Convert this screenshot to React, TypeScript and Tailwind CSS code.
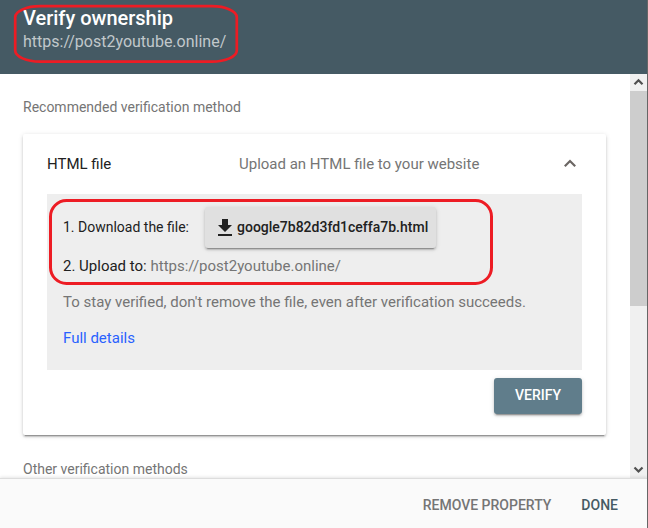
import React from "react";

function Header() {
  return (
    <header className="relative h-[74px] shrink-0 bg-[#455a64] pl-[23px] pt-[6px]">
      <h1 className="text-[20px] font-medium leading-6 text-white">Verify ownership</h1>
      <p className="pt-px text-[16px] leading-[22px] text-[#c1c8cb]">https://post2youtube.online/</p>
      <svg className="absolute left-0 top-0" width="260" height="74" fill="none" stroke="#ed1c24" strokeWidth="2.7">
        <rect x="15.2" y="6.2" width="221.6" height="55.4" rx="25" ry="11" />
      </svg>
    </header>
  );
}

function Instructions() {
  return (
    <div className="relative h-[176px] bg-[#eeeeee] px-4 pt-[13px] text-[15px] text-[#757575]">
      <div className="flex h-[41px] items-center text-[#212121]">
        <span className="w-[142px] text-[14px]">1. Download the file:</span>
        <button className="flex h-[41px] w-[231px] items-center rounded-[3px] bg-[#e0e0e0] pl-[13px] text-[14px] font-medium shadow-[0_2px_2px_rgba(0,0,0,0.16),0_3px_1px_-2px_rgba(0,0,0,0.25),0_1px_5px_rgba(0,0,0,0.14)]">
          <svg width="14" height="17" viewBox="0 0 14 17" fill="#212121" className="mr-[5px] shrink-0">
            <path d="M4 0h6v6h4L7 13 0 6h4zM0 15h14v2H0z" />
          </svg>
          google7b82d3fd1ceffa7b.html
        </button>
      </div>
      <p className="mt-[8px] leading-5">
        <span className="text-[#212121]">2. Upload to: </span>https://post2youtube.online/
      </p>
      <p className="mt-[16px] leading-5">To stay verified, don't remove the file, even after verification succeeds.</p>
      <a className="mt-[16px] block leading-5 text-[#2962ff]">Full details</a>
      <svg className="absolute left-0 top-0" width="450" height="100" fill="none" stroke="#ed1c24" strokeWidth="3">
        <rect x="3.5" y="6.5" width="441" height="83" rx="16" />
      </svg>
    </div>
  );
}

function MethodCard() {
  return (
    <section className="mt-[17px] h-[301px] w-[583px] rounded-[2px] bg-white px-6 shadow-[0_2px_2px_rgba(0,0,0,0.16),0_3px_1px_-2px_rgba(0,0,0,0.25),0_1px_5px_rgba(0,0,0,0.14)]">
      <div className="flex h-[60px] items-center text-[15px]">
        <h2 className="w-[192px] text-[#212121]">HTML file</h2>
        <span className="text-[#757575]">Upload an HTML file to your website</span>
        <svg className="mb-[3px] ml-auto mr-[6px]" width="12" height="8" viewBox="0 0 12 8" fill="none" stroke="#6b6663" strokeWidth="2.2">
          <path d="M.8 7.2L6 2l5.2 5.2" />
        </svg>
      </div>
      <Instructions />
      <div className="flex justify-end pt-2">
        <button className="h-9 w-[88px] rounded-[3px] bg-[#607d8b] pb-px text-[14px] font-medium text-white shadow-[0_2px_2px_rgba(0,0,0,0.16),0_3px_1px_-2px_rgba(0,0,0,0.25),0_1px_5px_rgba(0,0,0,0.14)]">
          VERIFY
        </button>
      </div>
    </section>
  );
}

function Scrollbar() {
  return (
    <div className="flex w-[17px] shrink-0 flex-col bg-[#f0f0f0]">
      <svg width="17" height="17" viewBox="0 0 17 17" fill="none" stroke="#505050" strokeWidth="2.2">
        <path d="M4.5 10.2l4-4 4 4" />
      </svg>
      <div className="h-[215px] bg-[#cdcdcd]" />
      <svg className="mt-auto" width="17" height="17" viewBox="0 0 17 17" fill="none" stroke="#505050" strokeWidth="2.2">
        <path d="M4.5 6.5l4 4 4-4" />
      </svg>
    </div>
  );
}

export default function App() {
  return (
    <div className="flex h-[528px] w-[648px] flex-col overflow-hidden border-r border-[#666666] bg-white font-['Roboto',sans-serif]">
      <Header />
      <div className="flex h-[404px] shrink-0">
        <main className="min-w-0 flex-1 overflow-hidden pl-[23px] pt-[23px] text-[14px] text-[#757575]">
          <p className="leading-5">Recommended verification method</p>
          <MethodCard />
          <p className="mt-[24px] leading-5">Other verification methods</p>
        </main>
        <Scrollbar />
      </div>
      <footer className="relative flex h-[50px] shrink-0 items-center justify-end gap-[30px] border-t border-[#dddddd] bg-[#fafafa] pr-[29px] pt-[3px] text-[14px] font-medium shadow-[0_-1px_3px_rgba(0,0,0,0.1)]">
        <button className="text-[#757575]">REMOVE PROPERTY</button>
        <button className="text-[#455a64]">DONE</button>
      </footer>
    </div>
  );
}
